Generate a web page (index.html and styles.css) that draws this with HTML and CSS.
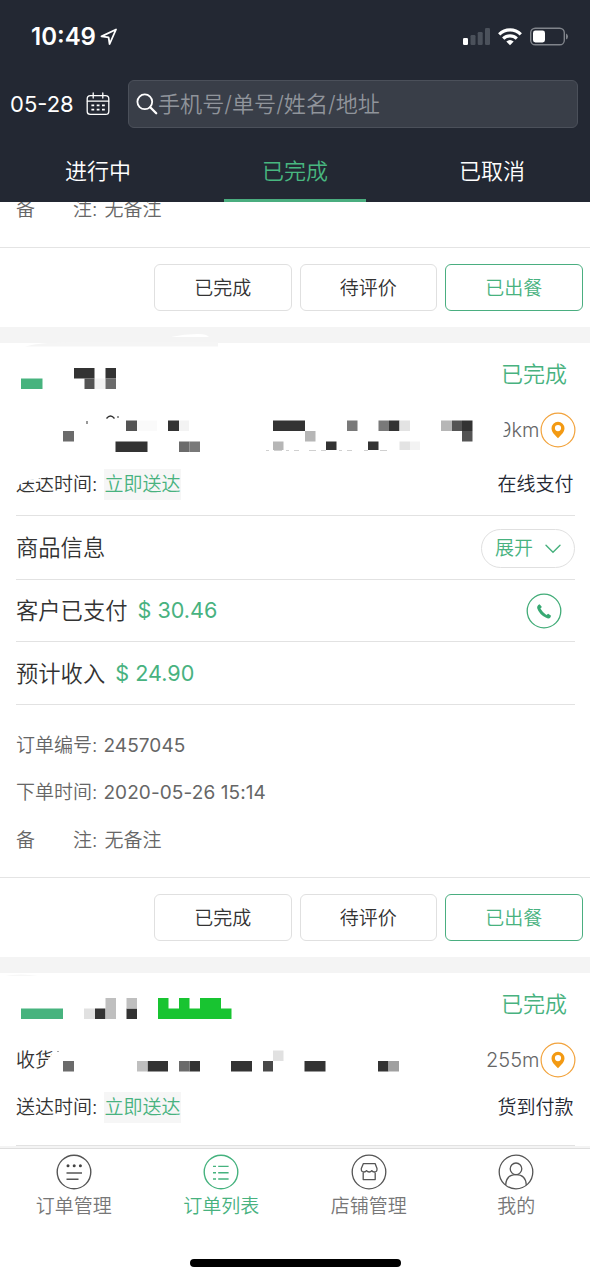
FILE: index.html
```html
<!DOCTYPE html>
<html lang="zh-CN">
<head>
<meta charset="utf-8">
<title>订单列表</title>
<link rel="stylesheet" href="styles.css">
</head>
<body>
<div class="app">
  <header class="header">
    <div class="status">
      <span class="clock">10:49</span>
      <svg class="location" width="18" height="18" viewBox="0 0 18 18"><path d="M1.5 8.4 16 1.5 9.6 16 8.6 9.3Z" fill="none" stroke="#fff" stroke-width="1.8" stroke-linejoin="round"/></svg>
      <svg class="indicators" width="106" height="20" viewBox="462 27 106 20">
        <rect x="463" y="38" width="5" height="7" rx="1.2" fill="#fff"/>
        <g fill="#4b515b"><rect x="470.5" y="35" width="5" height="10" rx="1.2"/><rect x="477.7" y="32" width="5" height="13" rx="1.2"/><rect x="485" y="28" width="5" height="17" rx="1.2"/></g>
        <g fill="none" stroke="#fff" stroke-width="3.2"><path d="M499.2 34.3a15.5 15.5 0 0 1 21.6 0"/><path d="M503.2 38.6a9.8 9.8 0 0 1 13.6 0"/></g>
        <path d="M506.3 41.6a5.6 5.6 0 0 1 7.4 0L510 45.2Z" fill="#fff"/>
        <rect x="530.7" y="28.2" width="33.6" height="16.6" rx="4.6" fill="none" stroke="#80848b" stroke-width="1.4"/>
        <rect x="533" y="30.5" width="12" height="12" rx="2.4" fill="#fff"/>
        <path d="M566 33.4q2 .8 2 3.1t-2 3.1Z" fill="#80848b"/>
      </svg>
    </div>
    <div class="search-row">
      <span class="date num">05-28</span>
      <svg class="calendar" width="24" height="24" viewBox="0 0 24 24"><g fill="none" stroke="#fff" stroke-width="1.3" stroke-linecap="round"><rect x="1.2" y="3.6" width="21.6" height="18.8" rx="3.2"/><path d="M1.4 9.2H22.6M7.2 1V6M16.8 1V6"/></g><path d="M5.4 13.3h2.8M10.7 13.3h2.8M16 13.3h2.8M5.4 17.6h2.8M10.7 17.6h2.8M16 17.6h2.8" stroke="#fff" stroke-width="1.8"/></svg>
      <div class="search">
        <svg width="22" height="22" viewBox="0 0 22 22"><circle cx="8.8" cy="8.8" r="7.4" fill="none" stroke="#fff" stroke-width="1.8"/><path d="m14.2 14.2 6 6" stroke="#fff" stroke-width="2.3" stroke-linecap="round"/></svg>
        <span class="hint">手机号/单号/姓名/地址</span>
      </div>
    </div>
    <nav class="tabs">
      <span class="tab">进行中</span>
      <span class="tab tab-active">已完成</span>
      <span class="tab">已取消</span>
    </nav>
  </header>

  <main class="orders">
    <section class="card">
      <div class="tail-note">备　　注:<span class="value">无备注</span></div>
      <div class="actions"><button class="btn">已完成</button><button class="btn">待评价</button><button class="btn btn-on">已出餐</button></div>
    </section>

    <section class="card">
      <div class="state">已完成</div>
      <div class="place place-tall"><span class="distance">9km</span><svg class="pin" width="36" height="36" viewBox="0 0 36 36"><circle cx="18" cy="18" r="16.9" fill="none" stroke="#f2a33c" stroke-width="1.2"/><path fill="#f39a13" fill-rule="evenodd" d="M18 9.8a6.5 6.5 0 0 0-6.5 6.5c0 3.6 3.2 6.8 6.5 9.9 3.3-3.1 6.5-6.3 6.5-9.9A6.5 6.5 0 0 0 18 9.8Zm0 3.2a3.1 3.1 0 1 1 0 6.2 3.1 3.1 0 0 1 0-6.2Z"/></svg></div>
      <div class="delivery delivery-tall"><span>送达时间:</span><span class="tag">立即送达</span><span class="payment">在线支付</span></div>
      <div class="line line-goods"><span>商品信息</span><button class="expand">展开<svg width="16" height="10" viewBox="0 0 16 10"><path d="m1 1.2 7 7 7-7" fill="none" stroke="#45b07c" stroke-width="1.4" stroke-linecap="round"/></svg></button></div>
      <div class="line line-paid"><span>客户已支付</span><span class="money num">$ 30.46</span>
        <svg class="phone" width="36" height="36" viewBox="0 0 36 36"><circle cx="18" cy="18" r="16.8" fill="none" stroke="#42ac78" stroke-width="1.3"/><path d="M11.4 13.2Q12 11.9 13.6 11.3L15.9 14.1 14.4 15.5Q16.6 19.4 20.4 21.9L22.2 20.7 25.1 22.8 24.2 24.8Q22.8 26.2 19.7 24.6 13.2 21.2 11.2 15.2 11 14.2 11.4 13.2Z" fill="#38a973"/></svg></div>
      <div class="line line-income"><span>预计收入</span><span class="money num">$ 24.90</span></div>
      <div class="details">
        <div>订单编号:<span class="value num">2457045</span></div>
        <div>下单时间:<span class="value num">2020-05-26 15:14</span></div>
        <div>备　　注:<span class="value">无备注</span></div>
      </div>
      <div class="actions"><button class="btn">已完成</button><button class="btn">待评价</button><button class="btn btn-on">已出餐</button></div>
      <svg class="mask" width="590" height="192" viewBox="0 328 590 192">
        <path d="M25 346.5Q42 342 70 342H218V346.5Z" fill="#f5f5f5"/><path d="M171 337Q184 334 198 334 207 334 209 337Z" fill="#fff"/>
        <path d="M12 466H60L54 477 40 478 30 480 12 488ZM495 415H502Q505 420 505 428 505 434 501 442H495Z" fill="#fff"/>
        <path d="M21 378.5h21.5V389H21Z" fill="#47b37e"/>
        <path d="M74 368h20.5v10.5H74ZM105.5 368H116v10.5h-10.5ZM168 420.5h11V431h-11ZM115.5 441.5h32V452h-32ZM273 420.5h32V431h-32ZM326 441.5h10.5V450H326ZM368 441.5h10.5V450H368ZM389 420.5h10.5V431H389ZM462 420.5h10.5V431H462Z" fill="#333"/>
        <path d="M84.5 378.5h10V389h-10ZM126 420.5h11V431h-11ZM452 420.5h10V431h-10ZM462 431h10.5v10.5H462Z" fill="#545454"/>
        <path d="M105.5 378.5H116V389h-10.5ZM63 431h11v10.5H63ZM179 441.5h10.5V452H179Z" fill="#6b6b6b"/>
        <path d="M189.5 441.5H200V452h-10.5ZM347 420.5h10.5V431H347ZM378.5 420.5H389V431h-10.5Z" fill="#797979"/>
        <path d="M305 431h10.5v10.5H305ZM273 441.5h10.5V450H273ZM441 420.5h11V431h-11Z" fill="#b6b6b6"/>
        <path d="M399.5 420.5H410V431h-10.5ZM399.5 441.5H410V450h-10.5Z" fill="#e3e3e3"/>
        <path d="M95 378.5h10V389H95ZM179 420.5h10V431h-10ZM410 441.5h10V450h-10Z" fill="#f3f3f3"/><path d="M137 420.5h20V431h-20Z" fill="#fafafa"/>
        <path d="M106.5 418.5q4-5 8 0" fill="none" stroke="#333" stroke-width="1.3"/><path d="M87 421v3M118 416v2" stroke="#555" stroke-width="1.2"/>
        <path d="M266 450.5h3M274 450.5h8M286 450.5h3M294 450.5h5M309 450.5h7M321 450.5h5M339 450.5h3M347 450.5h5M364 450.5h4M380 450.5h7" stroke="#d0d0d0" stroke-width="1"/>
      </svg>
    </section>

    <section class="card">
      <div class="state">已完成</div>
      <div class="place"><span class="receiver">收货</span><span class="distance">255m</span><svg class="pin" width="36" height="36" viewBox="0 0 36 36"><circle cx="18" cy="18" r="16.9" fill="none" stroke="#f2a33c" stroke-width="1.2"/><path fill="#f39a13" fill-rule="evenodd" d="M18 9.8a6.5 6.5 0 0 0-6.5 6.5c0 3.6 3.2 6.8 6.5 9.9 3.3-3.1 6.5-6.3 6.5-9.9A6.5 6.5 0 0 0 18 9.8Zm0 3.2a3.1 3.1 0 1 1 0 6.2 3.1 3.1 0 0 1 0-6.2Z"/></svg></div>
      <div class="delivery"><span>送达时间:</span><span class="tag">立即送达</span><span class="payment">货到付款</span></div>
      <svg class="mask" width="590" height="192" viewBox="0 958 590 192">
        <path d="M5 976Q20 973 38 976Z" fill="#f7f7f7"/>
        <path d="M56 1048V1072H42L47 1061 52 1054Z" fill="#fff"/>
        <path d="M21 1008.5h42V1019H21Z" fill="#47b37e"/>
        <path d="M158 998h10.5v10.5H179V998h10.5v10.5H200V998h21v10.5h10.5V1019H158Z" fill="#18c431"/>
        <path d="M95 1008.5h10.5V1019H95ZM126.5 1008.5H137V1019h-10.5ZM147.5 1061H168v10.5h-20.5ZM189.5 1061H200v10.5h-10.5ZM231 1061h21v10.5h-21ZM304.5 1061h21v10.5h-21ZM378 1061h10.5v10.5H378Z" fill="#333"/>
        <path d="M105.5 998H116v21h-10.5ZM126.5 998H137v10.5h-10.5ZM137 1061h10.5v10.5H137Z" fill="#bfbfbf"/>
        <path d="M84 1008.5h11V1019H84ZM273 1050.5h10.5V1061H273Z" fill="#e1e1e1"/>
        <path d="M63 1061h11v10.5H63ZM179 1061h10.5v10.5H179Z" fill="#6b6b6b"/>
        <path d="M263 1061h10v10.5h-10Z" fill="#484848"/><path d="M388.5 1061H399v10.5h-10.5Z" fill="#a0a0a0"/>
        <path d="M57 1051.5h2" stroke="#aaa" stroke-width="1"/>
      </svg>
    </section>
  </main>

  <footer class="dock">
    <div class="dock-items">
      <div class="dock-item"><svg width="36" height="36" viewBox="0 0 36 36"><g fill="none" stroke="#555" stroke-width="1.4"><circle cx="18" cy="18" r="16.8"/><path d="M10.5 19H26M10.5 25.2H22.5"/></g><g fill="#444"><circle cx="12" cy="11.8" r="1.5"/><circle cx="18.2" cy="11.8" r="1.5"/><circle cx="24.4" cy="11.8" r="1.5"/></g></svg><span>订单管理</span></div>
      <div class="dock-item dock-active"><svg width="36" height="36" viewBox="0 0 36 36"><g fill="none" stroke="#45b27e" stroke-width="1.4"><circle cx="18" cy="18" r="16.8"/><path d="M10 12.4H13M15.2 12.4H25.6M10 18.8H13M15.2 18.8H25.6M10 25H13M15.2 25H25.6"/></g></svg><span>订单列表</span></div>
      <div class="dock-item"><svg width="36" height="36" viewBox="0 0 36 36"><g fill="none" stroke="#555" stroke-width="1.3" stroke-linejoin="round"><circle cx="18" cy="18" r="16.8"/><path d="M12.4 9.6H24.1L26 14.6Q26.3 18 23.5 18 21.5 18 20.8 16.6 19.8 18 18.2 18 16.6 18 15.5 16.6 14.7 18 12.8 18 10 18 10.3 14.6ZM12.2 18V25.6H24.2V18"/></g></svg><span>店铺管理</span></div>
      <div class="dock-item"><svg width="36" height="36" viewBox="0 0 36 36"><g fill="none" stroke="#555" stroke-width="1.3"><circle cx="18" cy="18" r="16.8"/><circle cx="18" cy="14.8" r="5.8"/><path d="M7.7 31Q8.2 20.7 18 20.7T28.3 31"/></g></svg><span>我的</span></div>
    </div>
    <div class="home-bar"></div>
  </footer>
</div>
</body>
</html>
```
FILE: styles.css
```css
* { box-sizing: border-box; }
body { margin: 0; background: #fff; }
button { padding: 0; background: #fff; color: inherit; font: inherit; }
svg { display: block; flex: none; }

.app {
  display: flex;
  flex-direction: column;
  width: 590px;
  height: 1280px;
  overflow: hidden;
  font-family: Inter, "Noto Sans CJK SC", sans-serif;
  font-size: 19px;
  font-weight: 350;
  line-height: 1;
  color: #333;
  white-space: nowrap;
}

.header { display: flex; flex-direction: column; flex: none; height: 202px; background: #232833; color: #fff; }
.status { display: flex; align-items: center; height: 72px; padding: 2px 22px 0 31px; }
.clock { font-size: 24px; font-weight: 600; }
.location { margin-left: 4px; }
.indicators { margin-left: auto; }

.search-row { display: flex; align-items: center; height: 64px; padding: 0 12px 0 10px; }
.date { width: 76px; font-size: 22px; }
.calendar { margin-right: 18px; }
.search {
  display: flex;
  flex: 1;
  align-items: center;
  height: 48px;
  padding-left: 7px;
  border: 1.5px solid #4b505a;
  border-radius: 6px;
  background: #393e48;
  color: #90949b;
  font-size: 22.1px;
}
.hint { padding-top: 1px; }

.tabs { display: flex; flex: 1; gap: 55px; padding-left: 27px; }
.tab { display: flex; flex: none; align-items: center; justify-content: center; width: 142px; padding-top: 4px; font-size: 22px; }
.tab-active { border-bottom: 3px solid #4aad7f; padding-top: 7px; color: #48b780; }

.orders { flex: none; height: 946px; overflow: hidden; background: #f4f4f4; }
.card { position: relative; margin-bottom: 16px; background: #fff; }
.tail-note { height: 46px; padding: 0 16px; border-bottom: 1px solid #e4e4e4; color: #666; line-height: 15px; }
.value { margin-left: 7px; }
.num { font-weight: 390; }
.value.num { margin-left: 6px; letter-spacing: 0.1px; }

.actions { display: flex; justify-content: flex-end; gap: 8px; height: 79px; padding: 16px 7.5px 0 0; }
.btn { width: 137.5px; height: 47px; padding-top: 2px; border: 1.5px solid #e0e0e0; border-radius: 6px; }
.btn-on { border-color: #4aae80; color: #48b27f; }

.state { height: 64px; padding: 0 23px; color: #48b27f; font-size: 22px; line-height: 63px; text-align: right; }
.place { display: flex; align-items: center; height: 47px; padding: 0 14.5px 1px 16px; }
.place-tall { height: 48px; padding-bottom: 3px; }
.distance { margin-left: auto; color: #666; font-size: 20px; }
.delivery {
  display: flex;
  align-items: center;
  height: 62px;
  margin: 0 15px 0 16px;
  padding-bottom: 14px;
  border-bottom: 1px solid #e2e2e2;
}
.delivery-tall { height: 61px; padding-bottom: 2px; }
.tag { margin-left: 7px; padding: 6px 1px 6px 0; background: #f6f6f6; color: #48b27f; }
.payment { margin-left: auto; padding-right: 1.5px; color: #242833; }

.line { display: flex; align-items: center; margin: 0 15px 0 16px; border-bottom: 1px solid #e2e2e2; font-size: 22.3px; }
.line-goods { height: 64px; padding-top: 1px; }
.line-paid { height: 62px; padding-top: 1px; }
.line-income { height: 63px; padding-top: 2px; }
.money { margin-left: 10px; color: #48b27f; font-size: 21.6px; }
.expand {
  display: flex;
  align-items: center;
  justify-content: center;
  gap: 12px;
  width: 94px;
  height: 39px;
  padding-top: 1px;
  margin-left: auto;
  border: 1.5px solid #e0e0e0;
  border-radius: 20px;
  color: #48b27f;
  font-size: 19px;
}
.phone { margin: 0 13.5px 0 auto; }

.details { display: flex; flex-direction: column; height: 173px; padding: 16.5px 16px 0; border-bottom: 1px solid #e4e4e4; color: #666; }
.details div { height: 47.5px; line-height: 47px; }
.mask { position: absolute; top: -15px; left: 0; }

.dock { flex: 1; border-top: 1px solid #dedede; background: #fff; }
.dock-items { display: flex; height: 110px; }
.dock-item { display: flex; flex: 1; flex-direction: column; align-items: center; gap: 7px; padding-top: 5px; color: #777; }
.dock-active { color: #48b27f; }
.home-bar { width: 211px; height: 8px; margin: 0 auto; border-radius: 4px; background: #000; }
```
